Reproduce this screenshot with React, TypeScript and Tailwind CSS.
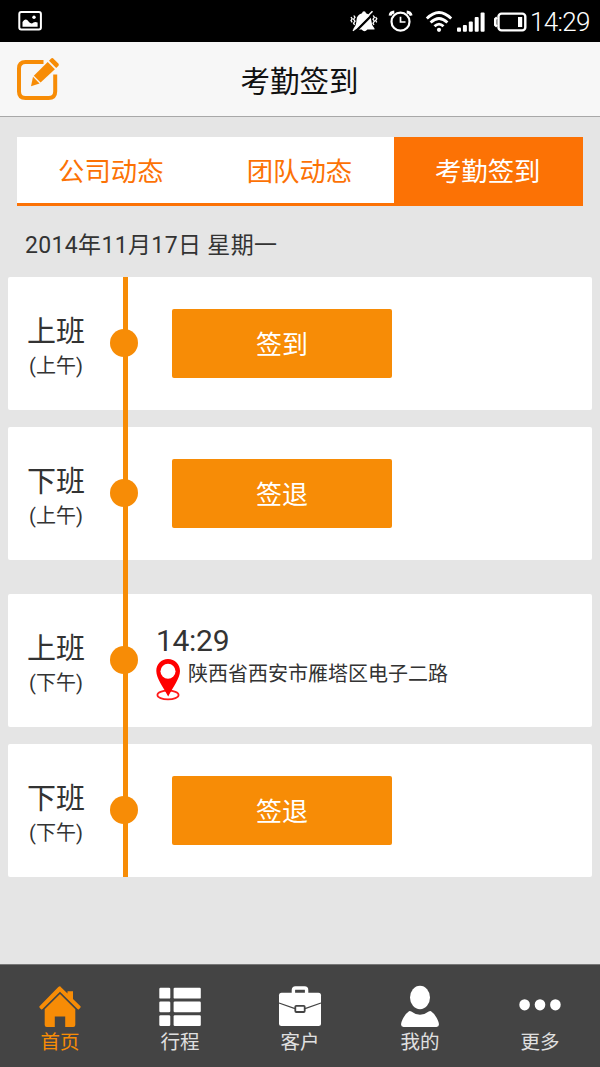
import type { ReactNode } from "react";

type Shift = {
  name: string;
  period: string;
  action?: string;
  time?: string;
  place?: string;
};

const TABS = ["公司动态", "团队动态", "考勤签到"];

const MORNING: Shift[] = [
  { name: "上班", period: "(上午)", action: "签到" },
  { name: "下班", period: "(上午)", action: "签退" },
];

const AFTERNOON: Shift[] = [
  {
    name: "上班",
    period: "(下午)",
    time: "14:29",
    place: "陕西省西安市雁塔区电子二路",
  },
  { name: "下班", period: "(下午)", action: "签退" },
];

const NAV: { label: string; icon: ReactNode }[] = [
  { label: "首页", icon: <HomeIcon /> },
  { label: "行程", icon: <ListIcon /> },
  { label: "客户", icon: <BriefcaseIcon /> },
  { label: "我的", icon: <PersonIcon /> },
  { label: "更多", icon: <MoreIcon /> },
];

function HomeIcon() {
  return (
    <svg width="44" height="44" viewBox="0 0 44 44" fill="currentColor">
      <path d="M22 2.3 L29.5 9.6 V7.3 H35 V15 L42.5 22.3 Q43 23 42.3 23.8 L41 25.2 Q40.2 25.7 39.5 25 L22 7.7 L4.5 25 Q3.8 25.7 3 25.2 L1.7 23.8 Q1 23 1.5 22.3 L20.3 3 Q22 1.3 23.7 3 Z" />
      <path d="M22 10 L37.3 25.2 V41 Q37.3 43 35.3 43 H27.2 V32.5 H16.8 V43 H8.7 Q6.7 43 6.7 41 V25.2 Z" />
    </svg>
  );
}

function ListIcon() {
  return (
    <svg width="44" height="44" viewBox="0 0 44 44" fill="currentColor">
      {[3.8, 17.5, 31.2].map((y) => (
        <g key={y}>
          <rect x="1.3" y={y} width="11" height="10.8" rx="1.2" />
          <rect x="15.6" y={y} width="27.2" height="10.8" rx="1.2" />
        </g>
      ))}
    </svg>
  );
}

function BriefcaseIcon() {
  return (
    <svg width="44" height="44" viewBox="0 0 44 44" fill="none">
      <rect x="1" y="8.7" width="42" height="33.3" rx="2.5" fill="currentColor" />
      <path
        d="M15.4 9 V6 Q15.4 4 17.4 4 H26.6 Q28.6 4 28.6 6 V9"
        stroke="currentColor"
        strokeWidth="3.4"
      />
      <path d="M1 19 L17 24.6 M43 19 L27 24.6" stroke="#444" strokeWidth="1.2" />
      <rect x="17.3" y="21.8" width="9.4" height="6.2" rx="1" stroke="#444" strokeWidth="1.8" />
    </svg>
  );
}

function PersonIcon() {
  return (
    <svg width="44" height="44" viewBox="0 0 44 44" fill="currentColor">
      <ellipse cx="22" cy="13.5" rx="10" ry="11.7" />
      <path d="M11 27.2 Q12 26.6 13.3 27.5 Q22 34.2 30.7 27.5 Q32 26.6 33 27.2 Q37.5 30 40.5 38 Q42 43 38.5 43 H5.5 Q2 43 3.5 38 Q6.5 30 11 27.2 Z" />
    </svg>
  );
}

function MoreIcon() {
  return (
    <svg width="44" height="44" viewBox="0 0 44 44" fill="currentColor">
      <ellipse cx="6.6" cy="20.8" rx="5.3" ry="5.6" />
      <ellipse cx="22" cy="20.8" rx="5.3" ry="5.6" />
      <ellipse cx="37.4" cy="20.8" rx="5.3" ry="5.6" />
    </svg>
  );
}

function EditIcon() {
  return (
    <svg width="44" height="44" viewBox="0 0 44 44" fill="#f78c06">
      <path
        d="M27.5 5 H9.5 Q3 5 3 11.5 V34.5 Q3 41 9.5 41 H32.5 Q39.2 41 39.2 34.5 V17.5"
        fill="none"
        stroke="#f78c06"
        strokeWidth="4"
      />
      <path d="M37 1.2 L42.6 6.8 Q43.3 8 42.3 8.9 L40.2 11 L33 3.8 L35.1 1.6 Q36 .6 37 1.2 Z" />
      <path d="M31.7 5.1 L38.9 12.3 L24.6 25.5 L17.8 18.7 Z" />
      <path d="M17 19.8 L23.6 26.4 L15 29.2 Z" />
    </svg>
  );
}

function PinIcon() {
  return (
    <svg width="24" height="42" viewBox="0 0 24 42">
      <ellipse cx="12" cy="36" rx="10.6" ry="4.4" fill="none" stroke="#ff1a1a" strokeWidth="1.7" />
      <path
        d="M12 0 C18.8 0 24 5 24 12 C24 19.5 17 28 12.2 37.5 C7.2 28 .3 19.5 .3 12 C.3 5 5.2 0 12 0 Z"
        fill="#ff0000"
      />
      <circle cx="12" cy="12.2" r="7.5" fill="#fff" />
    </svg>
  );
}

function StatusBar() {
  return (
    <div className="flex h-[42px] shrink-0 items-center justify-between bg-black pr-[10px] pl-[18px] text-white">
      <svg width="24" height="22" viewBox="0 0 24 22">
        <rect x="1.3" y="2" width="21.6" height="17.6" rx="2" fill="none" stroke="#fff" strokeWidth="2" />
        <path
          d="M4.5 16.8 V12 Q7 8.4 9.2 10 Q12 13.5 14 13.6 Q16 11 19.6 12.4 V16.8 Z"
          fill="#fff"
        />
        <circle cx="16" cy="7.3" r="1.7" fill="#fff" />
      </svg>
      <div className="flex items-center pt-0.5">
        <svg width="178" height="24" viewBox="0 0 178 24" fill="none" stroke="#fff">
          {/* muted bell */}
          <path
            d="M3.5 19.4 V18.4 Q6.5 15 6.5 10 Q6.8 4.6 12 3.2 Q12.4 1.2 14 1.2 Q15.6 1.2 16 3.2 Q21 4.6 21.2 10 Q21.4 15 24.5 18.4 V19.4 H17.4 Q14.5 23 11.6 19.4 Z"
            fill="#fff"
            stroke="none"
          />
          <path d="M5 22 L24.5 2.5" stroke="#000" strokeWidth="2.4" />
          <path d="M3 20.8 L22.5 1.3" strokeWidth="1.6" />
          <path
            d="M3.8 5.5 L5 7.3 L3.6 9.2 L5 11.2 L3.6 13.2 L4.6 14.8 M1 7 L2.2 8.8 L1 10.6 L2.2 12.4 M23.2 5.5 L24.4 7.3 L23 9.2 L24.4 11.2 L23 13.2 L24 14.8 M25.6 7 L26.8 8.8 L25.6 10.6 L26.8 12.4"
            strokeWidth="1.3"
          />
          {/* alarm clock */}
          <circle cx="50.5" cy="11.7" r="9" strokeWidth="2.2" />
          <path d="M50.5 6.8 V12 H55.5" strokeWidth="1.7" />
          <path d="M40 5.6 Q40.5 2.2 44.3 2 M56.7 2 Q60.5 2.2 61.2 5.6" strokeWidth="2.8" />
          {/* wifi */}
          <path
            d="M76.8 8.6 Q89 -3.6 101.2 8.6 M80.6 12.6 Q89 4.4 97.4 12.6 M84.5 16.3 Q89 12 93.5 16.3"
            strokeWidth="2.8"
          />
          <circle cx="89" cy="19.8" r="2.1" fill="#fff" stroke="none" />
          {/* signal */}
          <g fill="#fff" stroke="none">
            <rect x="107" y="17.5" width="4" height="4.2" rx="1" />
            <rect x="112.9" y="15" width="4" height="6.7" rx="1" />
            <rect x="118.8" y="11.5" width="4" height="10.2" rx="1" />
            <rect x="124.7" y="7" width="4" height="14.7" rx="1" />
            <rect x="130.6" y="2.5" width="4" height="19.2" rx="1" />
          </g>
          {/* battery */}
          <rect x="148.5" y="3.6" width="26.8" height="16.8" rx="3" strokeWidth="2.4" />
          <path d="M147 7.5 L145.3 9 V15 L147 16.5" strokeWidth="2.6" />
          <rect x="168" y="7" width="4.2" height="10" fill="#fff" stroke="none" />
        </svg>
        <span className="ml-[2px] w-[60px] text-[26px] leading-none font-light tracking-[-0.7px] whitespace-nowrap">14:29</span>
      </div>
    </div>
  );
}

function ShiftCard({ shift }: { shift: Shift }) {
  return (
    <div className="flex h-[133px] items-center rounded-[2px] bg-white">
      <div className="w-24 shrink-0 pt-[7px] text-center">
        <div className="text-[29px] leading-[38px]">{shift.name}</div>
        <div className="text-xl leading-[30px]">{shift.period}</div>
      </div>
      <div className="mb-px ml-1.5 size-7 shrink-0 rounded-full bg-[#f78c06]" />
      {shift.action ? (
        <button className="mb-px ml-[34px] h-[69px] w-[220px] rounded-[2px] bg-[#f78c06] pt-[5px] text-[26px] text-white">
          {shift.action}
        </button>
      ) : (
        <div className="ml-[18px] pt-1">
          <div className="text-[30px] leading-[34px] tracking-[-0.3px]">{shift.time}</div>
          <div className="flex pt-px">
            <PinIcon />
            <span className="ml-2 text-xl leading-[31px]">{shift.place}</span>
          </div>
        </div>
      )}
    </div>
  );
}

export default function App() {
  return (
    <div className="flex h-[1067px] w-[600px] flex-col overflow-hidden bg-[#e5e5e5] font-['Roboto','Noto_Sans_CJK_SC',sans-serif] text-[#333]">
      <StatusBar />

      <header className="flex h-[75px] shrink-0 items-center border-b border-[#a8a8a8] bg-[#f7f7f7] px-4">
        <EditIcon />
        <h1 className="flex-1 pt-[6px] pr-[45px] text-center text-[29.5px] text-[#111]">
          考勤签到
        </h1>
      </header>

      <nav className="mx-[17px] mt-5 grid h-[69px] shrink-0 grid-cols-3 border-b-[3px] border-[#fc7205] bg-white">
        {TABS.map((tab, i) => (
          <button
            key={tab}
            className={
              i === 2
                ? "-mb-[3px] bg-[#fc7205] pt-[5px] pr-0.5 pb-[2px] text-[26.4px] text-white"
                : "pt-[6px] pr-px text-[26.4px] text-[#fc7205]"
            }
          >
            {tab}
          </button>
        ))}
      </nav>

      <p className="mt-[23px] ml-[25px] text-[23px] leading-[34px] tracking-[0.35px]">
        2014年11月17日 星期一
      </p>

      <main className="relative mx-2 mt-[14px] flex flex-col gap-[34px]">
        {[MORNING, AFTERNOON].map((shifts, i) => (
          <section key={i} className="flex flex-col gap-[17px]">
            {shifts.map((shift) => (
              <ShiftCard key={shift.name} shift={shift} />
            ))}
          </section>
        ))}
        {/* timeline running through all the cards */}
        <div className="absolute inset-y-0 left-[115px] w-[5px] bg-[#f78c06]" />
      </main>

      <footer className="mt-auto grid h-[103px] shrink-0 grid-cols-5 border-t border-[#777] bg-[#444]">
        {NAV.map((item, i) => (
          <div
            key={item.label}
            className={`flex flex-col items-center pt-[19px] ${
              i === 0 ? "text-[#f78c06]" : "text-white"
            }`}
          >
            {item.icon}
            <span
              className={`text-[19.5px] leading-[30px] ${
                i === 0 ? "text-[#f78c06]" : "text-[#e0e0e0]"
              }`}
            >
              {item.label}
            </span>
          </div>
        ))}
      </footer>
    </div>
  );
}
